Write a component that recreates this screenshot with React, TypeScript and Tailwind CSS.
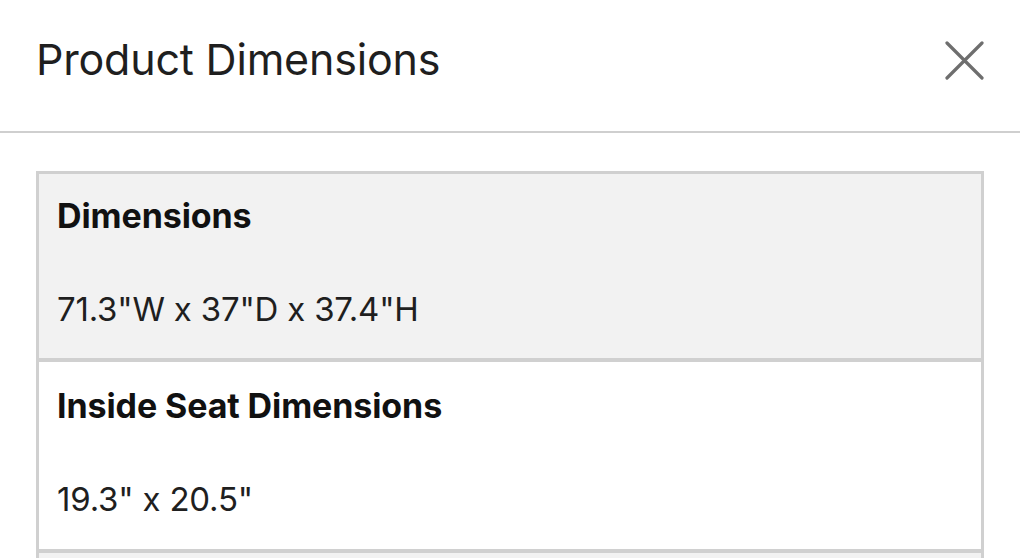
const rows = [
  { label: "Dimensions", value: '71.3"W x 37"D x 37.4"H', shaded: true },
  { label: "Inside Seat Dimensions", value: '19.3" x 20.5"', shaded: false },
]

export default function App() {
  return (
    <div className="h-[558px] w-[1020px] overflow-hidden bg-white font-['Inter','Liberation_Sans',sans-serif] text-[#1f1f1f]">
      <div className="h-[133px] border-b-2 border-[#cfcfcf] pl-[36px] pr-[36px] pt-[35px]">
        <div className="flex h-[48px] items-center justify-between">
          <h1 className="text-[43px] font-normal leading-[48px] tracking-[-0.2px]">Product Dimensions</h1>
          <svg width="39" height="39" viewBox="0 0 39 39" className="mt-[3px] text-[#6e6e6e]">
            <path d="M2 2 L37 37 M37 2 L2 37" stroke="currentColor" strokeWidth="3.2" strokeLinecap="round" />
          </svg>
        </div>
      </div>
      <div className="px-[36px] pt-[38px]">
        <div className="border-x-[3px] border-t-[3px] border-[#d0d0d0]">
          {rows.map((r, i) => (
            <div
              key={r.label}
              className={`px-[18px] ${i > 0 ? "h-[191px] border-t-[4px] border-[#d0d0d0] pt-[24px]" : "h-[184px] pt-[22px]"} ${r.shaded ? "bg-[#f2f2f2]" : "bg-white"}`}
            >
              <div className="text-[34px] font-bold leading-[40px] tracking-[-0.1px] text-[#111]">{r.label}</div>
              <div className="mt-[53px] text-[33px] leading-[40px] tracking-[-0.2px]">{r.value}</div>
            </div>
          ))}
          <div className="h-[40px] border-t-[4px] border-[#d0d0d0] bg-[#f2f2f2]" />
        </div>
      </div>
    </div>
  )
}
